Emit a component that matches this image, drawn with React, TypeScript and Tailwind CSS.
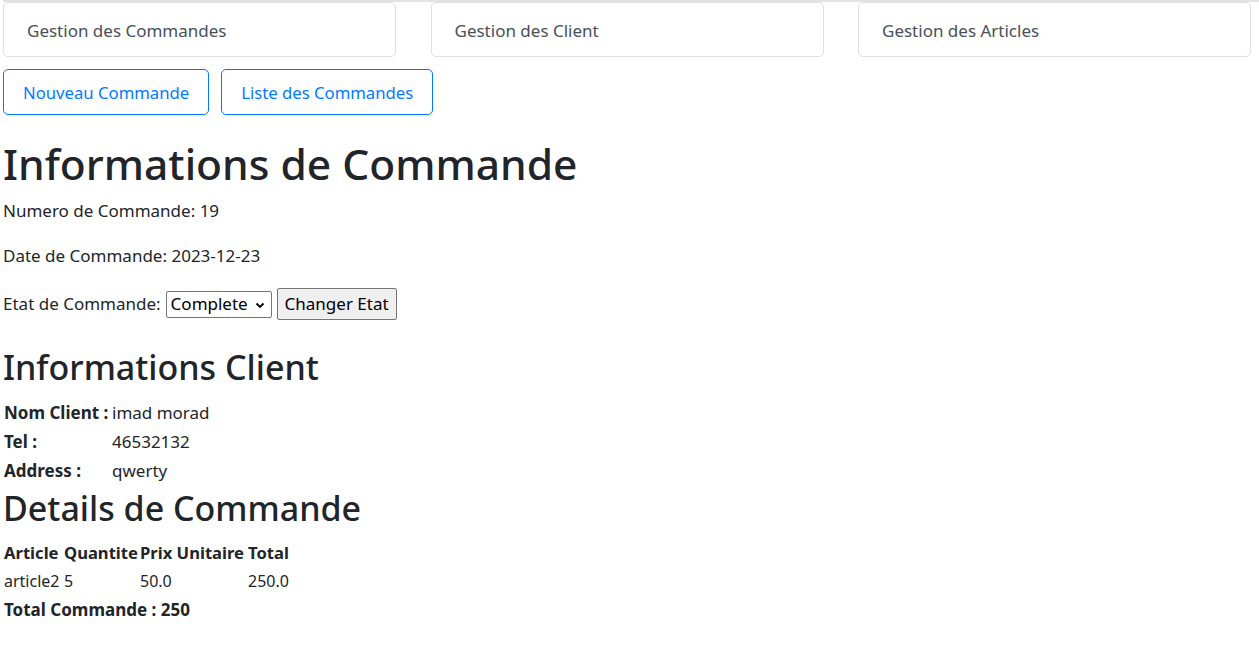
export default function App() {
  const font = { fontFamily: '"Noto Sans", "Open Sans", sans-serif' };
  return (
    <div style={font} className="w-[1259px] min-h-[667px] bg-white text-[#212529] text-[17px] leading-[24px]">
      <div className="ml-[3px] h-[2px] bg-[#e3e3e3]" />
      <div className="ml-[3px] grid w-[1248px] grid-cols-3 gap-x-[34.5px]">
        <div className="flex h-[55px] items-center rounded-[5px] border border-[#dfdfdf] pl-[23px] pt-[2px] text-[#495057]">Gestion des Commandes</div>
        <div className="flex h-[55px] items-center rounded-[5px] border border-[#dfdfdf] pl-[23px] pt-[2px] text-[#495057]">Gestion des Client</div>
        <div className="flex h-[55px] items-center rounded-[5px] border border-[#dfdfdf] pl-[23px] pt-[2px] text-[#495057]">Gestion des Articles</div>
      </div>
      <div className="ml-[3px] mt-[12px] flex gap-[12px]">
        <button className="flex h-[46px] items-center rounded-[5px] border border-[#007bff] px-[19px] pt-[1px] text-[16.7px] text-[#007bff]">Nouveau Commande</button>
        <button className="flex h-[46px] items-center rounded-[5px] border border-[#007bff] px-[19px] pt-[1px] text-[16.7px] text-[#007bff]">Liste des Commandes</button>
      </div>
      <div className="pl-[3px]">
        <h1 className="mt-[23px] text-[42.5px] font-medium leading-[1.2]">Informations de Commande</h1>
        <p className="mt-[10px]">Numero de Commande: 19</p>
        <p className="mt-[21px]">Date de Commande: 2023-12-23</p>
        <div className="mt-[20px] flex h-[32px] items-center">
          <span>Etat de Commande:</span>
          <div className="relative ml-[5px] flex h-[27px] w-[106px] items-center rounded-[2px] border border-[#767676] bg-white pl-[4px] text-black">
            <span>Complete</span>
            <svg className="absolute right-[6px] top-[10px]" width="10" height="7" viewBox="0 0 10 7">
              <path d="M1.5 1.5 L5 5 L8.5 1.5" fill="none" stroke="#000" strokeWidth="1.8" />
            </svg>
          </div>
          <button className="ml-[5px] flex h-[32px] w-[120px] items-center justify-center rounded-[2px] border border-[#767676] bg-[#efefef] text-black">Changer Etat</button>
        </div>
        <h2 className="mt-[27px] text-[34px] font-medium leading-[1.2]">Informations Client</h2>
        <div className="mt-[10px] grid grid-cols-[108px_auto] pl-[1px] leading-[29px]">
          <div className="font-bold">Nom Client :</div>
          <div>imad morad</div>
          <div className="font-bold">Tel :</div>
          <div>46532132</div>
          <div className="font-bold">Address :</div>
          <div>qwerty</div>
        </div>
        <h2 className="mt-[3px] text-[34px] font-medium leading-[1.2]">Details de Commande</h2>
        <div className="mt-[9px] grid w-fit grid-cols-[60px_76px_108px_auto] pl-[1px] text-[16px] leading-[29px]">
          <div className="text-[16.6px] font-bold">Article</div>
          <div className="text-[16.6px] font-bold">Quantite</div>
          <div className="text-[16.6px] font-bold">Prix Unitaire</div>
          <div className="text-[16.6px] font-bold">Total</div>
          <div>article2</div>
          <div>5</div>
          <div>50.0</div>
          <div>250.0</div>
        </div>
        <div className="pl-[1px] font-bold leading-[28px]">Total Commande : 250</div>
      </div>
    </div>
  );
}
